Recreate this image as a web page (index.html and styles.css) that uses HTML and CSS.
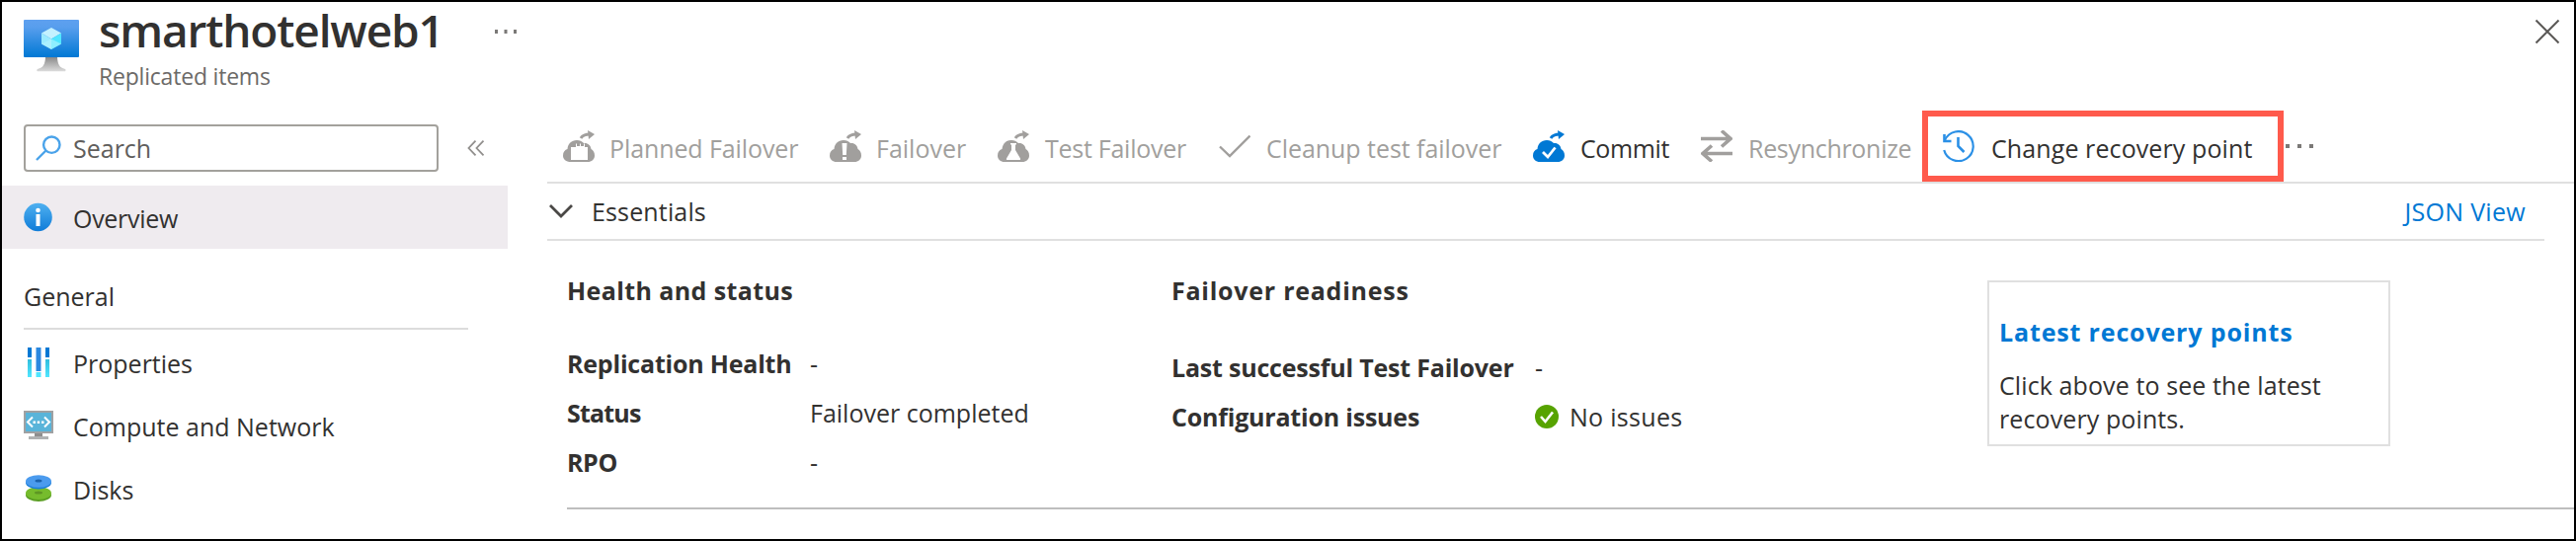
FILE: index.html
```html
<!DOCTYPE html>
<html lang="en">
<head>
<meta charset="utf-8">
<title>smarthotelweb1</title>
<link rel="stylesheet" href="styles.css">
</head>
<body>
<div class="frame">
  <header class="header">
    <svg class="vm-icon" viewBox="0 0 56 56">
      <defs>
        <linearGradient id="screen" x1="0" y1="0" x2="0" y2="1"><stop offset="0" stop-color="#5ea0ef"/><stop offset=".2" stop-color="#589eed"/><stop offset="1" stop-color="#0078d4"/></linearGradient>
        <linearGradient id="stand" x1="0" y1="0" x2="0" y2="1"><stop offset="0" stop-color="#8a8a8a"/><stop offset="1" stop-color="#dcdcdc"/></linearGradient>
      </defs>
      <path d="M22 38h12c.4 7 2 10.500 8 12 .8.300.6 2.300 0 2.300H14c-1 0-1-2 0-2.300 6-1.500 7.600-5 8-12z" fill="url(#stand)"/>
      <rect width="56" height="38" rx="1" fill="url(#screen)"/>
      <path d="M28 8l10 5.500-10 6-10-6z" fill="#c3f1ff"/>
      <path d="M18 13.500l10 6V30l-10-5.500z" fill="#9cebff"/>
      <path d="M38 13.500l-10 6V30l10-5.500z" fill="#50e6ff"/>
      <path d="M18 24.500l10-5 10 5L28 30z" fill="#b8f4ff" opacity=".6"/>
    </svg>
    <div class="titles">
      <h1 class="title">smarthotelweb1</h1>
      <p class="subtitle">Replicated items</p>
    </div>
    <svg class="title-more" viewBox="0 0 22 4"><path d="M0 0h3v4H0zM9.500 0h3v4h-3zM19 0h3v4h-3z" fill="#7b7977"/></svg>
    <svg class="close" viewBox="0 0 26 26"><path d="M1.500 1.500l23 23m0-23l-23 23" stroke="#5a5856" stroke-width="2"/></svg>
  </header>

  <div class="body">
    <nav class="sidebar">
      <div class="search-row">
        <div class="search">
          <svg class="search-icon" viewBox="0 0 26 26"><g fill="none" stroke="#4aa3ea" stroke-width="2.400"><circle cx="16.300" cy="9.700" r="8.200"/><path d="M10.500 15.500L1 25"/></g></svg>
          <span>Search</span>
        </div>
        <svg class="collapse" viewBox="0 0 18 16"><path d="M8.500.700L1.500 8l7 7.300M16.500.700L9.500 8l7 7.300" fill="none" stroke="#918f8d" stroke-width="1.800"/></svg>
      </div>
      <a class="item selected">
        <svg class="item-icon" viewBox="0 0 30 30"><defs><linearGradient id="info" x1="0" y1="0" x2="0" y2="1"><stop offset="0" stop-color="#4fb0f0"/><stop offset="1" stop-color="#0f7cd8"/></linearGradient></defs><circle cx="14.500" cy="15" r="14.300" fill="url(#info)"/><rect x="12.500" y="12" width="4" height="12" fill="#fff"/><circle cx="14.500" cy="8" r="2.300" fill="#fff"/></svg>
        <span class="overview">Overview</span>
      </a>
      <h2 class="group">General</h2>
      <a class="item first">
        <svg class="item-icon" viewBox="0 0 30 30"><defs><linearGradient id="bar" x1="0" y1="0" x2="0" y2="1"><stop offset="0" stop-color="#32bedd"/><stop offset="1" stop-color="#50e6ff"/></linearGradient></defs><path d="M4 0h4v10H4zM22 0h4v10h-4z" fill="#0078d4"/><path d="M4 12h4v18H4zM22 12h4v18h-4z" fill="url(#bar)"/><path d="M12.500 0h5v24h-5z" fill="#2b88e0"/><path d="M12.500 25h5v5h-5z" fill="#50e6ff"/></svg>
        <span>Properties</span>
      </a>
      <a class="item">
        <svg class="item-icon" viewBox="0 0 30 30"><path d="M11 22h8v4h-8z" fill="#8e8e8e"/><path d="M5 26h20v3H5z" fill="#b0b2b3"/><path d="M0 0h30v23H0z" fill="#a0a1a2"/><path d="M2 2h26v19H2z" fill="#59b4d9"/><path d="M9 6.500L4 11.500l5 5M21 6.500l5 5-5 5" fill="none" stroke="#fff" stroke-width="2"/><path d="M9.500 10.500h2.500v2.500H9.500zM13.700 10.500h2.500v2.500h-2.500zM18 10.500h2.500v2.500H18z" fill="#fff"/></svg>
        <span>Compute and Network</span>
      </a>
      <a class="item">
        <svg class="item-icon" viewBox="0 0 30 30"><ellipse cx="15" cy="21.500" rx="13" ry="6.500" fill="#5a9e22"/><ellipse cx="15" cy="19.500" rx="13" ry="6.500" fill="#76bc2d"/><ellipse cx="15" cy="19" rx="4" ry="1.500" fill="#5e9624"/><ellipse cx="15" cy="9" rx="13" ry="6.500" fill="#1b7fd9"/><ellipse cx="15" cy="7.500" rx="13" ry="6.300" fill="#4b9bee"/><ellipse cx="15" cy="7" rx="3.500" ry="1.600" fill="#1b62ad"/></svg>
        <span>Disks</span>
      </a>
    </nav>

    <main class="main">
      <div class="toolbar">
        <a class="cmd disabled planned">
          <svg class="cmd-icon" viewBox="0 0 32 32"><path d="M8 32C3 32 0 29.500 0 25.500c0-3.500 2-6 4.500-6.500C5 13.500 8.500 10 14 10c3 0 5 1 7 3 4-.5 7 2 7.500 6 2 .8 3.500 3.500 3.500 6.500 0 4-3 6.500-7 6.500z" fill="#a19f9d"/><path d="M8 17h5v-3.500h9V17h3v13H8z" fill="#fff"/><path d="M14 12h3v4h-3zM18 13h3v3h-3z" fill="#a19f9d"/><path d="M18 8c2-3 5-4 9-4" fill="none" stroke="#a19f9d" stroke-width="3"/><path d="M25 0l7 4-6 5z" fill="#a19f9d"/></svg>
          <span>Planned Failover</span>
        </a>
        <a class="cmd disabled failover">
          <svg class="cmd-icon" viewBox="0 0 32 32"><path d="M7 32C3 32 0 29.500 0 25.500c0-3.500 2-6 4.500-6.500C5 13.500 8.500 10 14 10c3 0 5 1 7 3 4-.5 7 2 7.500 6 2 .8 3.500 3.500 3.500 6.500 0 4-3 6.500-7 6.500z" fill="#a19f9d"/><path d="M12.500 13h5l-.7 12h-3.600zM13 27h4v3h-4z" fill="#fff"/><path d="M18 8c2-3 5-4 9-4" fill="none" stroke="#a19f9d" stroke-width="3"/><path d="M25 0l7 4-6 5z" fill="#a19f9d"/></svg>
          <span>Failover</span>
        </a>
        <a class="cmd disabled test">
          <svg class="cmd-icon" viewBox="0 0 32 32"><path d="M7 32C3 32 0 29.500 0 25.500c0-3.500 2-6 4.500-6.500C5 13.500 8.500 10 14 10c3 0 5 1 7 3 4-.5 7 2 7.500 6 2 .8 3.500 3.500 3.500 6.500 0 4-3 6.500-7 6.500z" fill="#a19f9d"/><path d="M13 13h6v1.500h-1V20l5 8.500c.5 1-.2 1.500-1 1.500H10c-.8 0-1.500-.5-1-1.500L14 20v-5.500h-1z" fill="#fff"/><path d="M18 8c2-3 5-4 9-4" fill="none" stroke="#a19f9d" stroke-width="3"/><path d="M25 0l7 4-6 5z" fill="#a19f9d"/></svg>
          <span>Test Failover</span>
        </a>
        <a class="cmd disabled cleanup">
          <svg class="cmd-icon" viewBox="0 0 32 32"><path d="M1 16.500l10 9.500L31.500 5.500" fill="none" stroke="#a19f9d" stroke-width="2.400"/></svg>
          <span>Cleanup test failover</span>
        </a>
        <a class="cmd commit">
          <svg class="cmd-icon" viewBox="0 0 32 32"><path d="M7 32C3 32 0 29.500 0 25.500c0-3.500 2-6 4.500-6.500C5 13.500 8.500 10 14 10c3 0 5 1 7 3 4-.5 7 2 7.500 6 2 .8 3.500 3.500 3.500 6.500 0 4-3 6.500-7 6.500z" fill="#0078d4"/><path d="M10 22l5 5 7.500-9.500" fill="none" stroke="#fff" stroke-width="2.800"/><path d="M18 8c2-3 5-4 9-4" fill="none" stroke="#0078d4" stroke-width="3"/><path d="M25 0l7 4-6 5z" fill="#0078d4"/></svg>
          <span>Commit</span>
        </a>
        <a class="cmd disabled resync">
          <svg class="cmd-icon" viewBox="0 0 32 32"><path d="M0 8.500h30M21 .500l9 8-9 8M32 23.500H2M11 15.500l-9 8 9 8" fill="none" stroke="#a19f9d" stroke-width="3.600"/></svg>
          <span>Resynchronize</span>
        </a>
        <a class="cmd highlighted">
          <svg class="cmd-icon" viewBox="0 0 32 32"><g fill="none" stroke="#2b90e6" stroke-width="2.200"><path d="M2 10A15 15 0 1 1 1.200 20"/><path d="M1.500 4v7h7" stroke-width="2.600"/><path d="M15.500 7v9l6 6" stroke-width="2.600"/></g></svg>
          <span>Change recovery point</span>
        </a>
        <svg class="toolbar-more" viewBox="0 0 28 4"><path d="M0 0h4v4H0zM12 0h4v4h-4zM24 0h4v4h-4z" fill="#7b7977"/></svg>
      </div>

      <div class="essentials-bar">
        <svg class="chevron" viewBox="0 0 24 14"><path d="M1 1l11 11L23 1" fill="none" stroke="#4a4846" stroke-width="2.800"/></svg>
        <span class="essentials">Essentials</span>
        <a class="json">JSON View</a>
      </div>

      <section class="details">
        <div class="health">
          <h3 class="wide">Health and status</h3>
          <dl class="facts">
            <dt>Replication Health</dt><dd>-</dd>
            <dt class="status">Status</dt><dd>Failover completed</dd>
            <dt class="rpo">RPO</dt><dd>-</dd>
          </dl>
        </div>
        <div class="readiness">
          <h3 class="wider">Failover readiness</h3>
          <dl class="facts">
            <dt>Last successful Test Failover</dt><dd>-</dd>
            <dt>Configuration issues</dt>
            <dd class="ok"><svg class="ok-icon" viewBox="0 0 24 24"><circle cx="12" cy="12" r="12" fill="#57a300"/><path d="M6 12l4.500 5L18 7.500" fill="none" stroke="#fff" stroke-width="2.600"/></svg><span>No issues</span></dd>
          </dl>
        </div>
        <aside class="card">
          <a class="card-link">Latest recovery points</a>
          <p class="card-text">Click above to see the latest recovery points.</p>
        </aside>
      </section>
    </main>
  </div>
</div>
</body>
</html>
```
FILE: styles.css
```css
* { box-sizing: border-box; margin: 0; padding: 0; }
body { background: #fff; color: #323130; font: 400 25px/34px "Open Sans", "Noto Sans", sans-serif; white-space: nowrap; }
svg { display: block; flex: none; }
.frame { width: 2608px; height: 548px; border: 2px solid #000; overflow: hidden; }

.header { display: flex; height: 110px; padding: 0 14px 0 22px; align-items: flex-start; }
.vm-icon { width: 56px; height: 56px; margin-top: 18px; }
.titles { width: 401px; margin-left: 20px; }
.title { font-size: 46px; line-height: 56px; font-weight: 600; letter-spacing: -1.15px; }
.subtitle { margin-top: 2px; font-size: 23px; line-height: 34px; letter-spacing: -.2px; color: #6c6a68; }
.title-more { width: 22px; height: 4px; margin-top: 28px; }
.close { width: 26px; height: 26px; margin: 17px 0 0 auto; }

.body { display: grid; grid-template-columns: 552px 1fr; }
.sidebar { width: 512px; padding-top: 14px; }
.search-row { display: flex; align-items: center; padding-left: 22px; gap: 29px; }
.search { display: flex; align-items: center; width: 420px; height: 48px; padding-left: 10px; gap: 12px; border: 2px solid #a3a19c; border-radius: 4px; color: #605e5c; }
.search-icon { width: 26px; height: 26px; }
.collapse { width: 18px; height: 16px; }
.item { display: flex; align-items: center; height: 64px; padding-left: 22px; gap: 20px; }
.item span { padding-top: 2px; }
.item-icon { width: 30px; height: 30px; }
.selected { margin-top: 14px; background: #efebef; }
.overview { letter-spacing: -.3px; }
.group { margin: 31px 0 0 22px; width: 450px; height: 51px; border-bottom: 2px solid #dcdcdc; font-size: 25px; font-weight: 400; }
.first { margin-top: 1px; }

.toolbar { display: flex; align-items: center; height: 74px; padding-left: 16px; border-bottom: 2px solid #e0e0e0; }
.cmd { display: flex; align-items: center; gap: 15px; height: 72px; }
.cmd span { padding-top: 3px; }
.cmd-icon { width: 32px; height: 32px; }
.disabled { color: #a19f9d; }
.planned { width: 270px; letter-spacing: -.1px; }
.failover { width: 170px; }
.test { width: 224px; gap: 16px; letter-spacing: -.26px; }
.cleanup { width: 318px; gap: 16px; letter-spacing: -.05px; }
.commit { width: 170px; gap: 16px; letter-spacing: -.4px; }
.resync { width: 224px; gap: 16px; letter-spacing: -.3px; }
.highlighted { width: 366px; padding-left: 15px; border: 6px solid #ff5a4c; gap: 17px; letter-spacing: .1px; }
.toolbar-more { width: 28px; height: 4px; margin-left: 2px; }

.essentials-bar { display: flex; align-items: center; width: 2022px; height: 58px; padding: 0 19px 0 2px; border-bottom: 2px solid #e0e0e0; }
.chevron { width: 24px; height: 14px; }
.essentials { margin-left: 19px; letter-spacing: .15px; }
.json { margin-left: auto; color: #0078d4; letter-spacing: .3px; }

.details { display: flex; height: 272px; margin-left: 20px; padding-top: 33px; border-bottom: 2px solid #bebebe; }
h3 { font-size: 25px; line-height: 34px; font-weight: 700; }
.wide { letter-spacing: .4px; }
.wider { letter-spacing: .75px; }
.facts { display: grid; grid-auto-rows: 50px; align-items: center; }
dt { font-weight: 700; letter-spacing: -.2px; }
.status { letter-spacing: -.8px; }
.rpo { letter-spacing: -.4px; }
.health { width: 612px; }
.health .facts { grid-template-columns: 246px 1fr; margin-top: 32px; }
.readiness { width: 826px; }
.readiness .facts { grid-template-columns: 368px 1fr; margin-top: 36px; }
.ok { display: flex; align-items: center; gap: 11px; letter-spacing: .3px; }
.ok-icon { width: 24px; height: 24px; }
.card { width: 408px; height: 168px; margin-top: 7px; padding: 33px 10px 0; border: 2px solid #e0e0e0; white-space: normal; }
.card-link { display: block; color: #0078d4; font-weight: 700; letter-spacing: .85px; }
.card-text { width: 350px; margin-top: 20px; letter-spacing: .1px; }
```
